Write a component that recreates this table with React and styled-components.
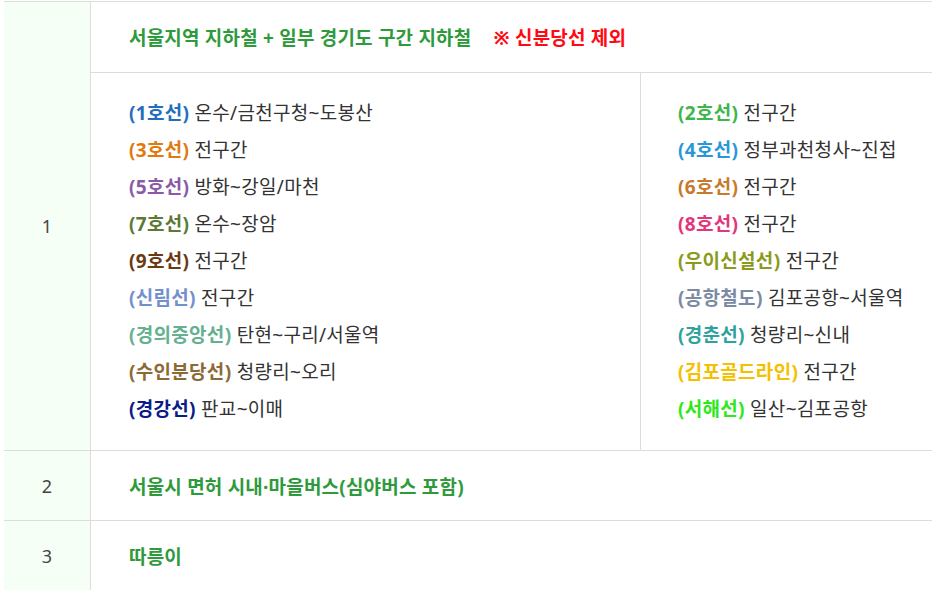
import React from "react";
import styled, { createGlobalStyle } from "styled-components";

const GlobalStyle = createGlobalStyle`
  html, body {
    margin: 0;
    padding: 0;
    overflow: hidden;
    background: #fff;
  }
  body {
    font-family: "Noto Sans", "Noto Sans CJK KR", sans-serif;
    color: #333;
  }
`;

const Table = styled.div`
  margin: 1px 0 0 4px;
  width: 940px;
  border-top: 1px solid #dcdcdc;
`;

const Row = styled.div`
  display: grid;
  grid-template-columns: 87px 1fr;
  border-bottom: 1px solid #dcdcdc;
`;

const NumCell = styled.div`
  background: #f5fff6;
  border-right: 1px solid #dcdcdc;
  display: flex;
  align-items: center;
  justify-content: center;
  font-size: 18px;
  color: #444;
`;

const Body = styled.div`
  display: flex;
  flex-direction: column;
`;

const Title = styled.div`
  display: flex;
  align-items: center;
  height: ${(p) => p.$height || "69px"};
  padding-left: 38px;
  font-size: 19px;
  font-weight: 700;
  letter-spacing: 0.2px;
  color: #2e9a3c;
  white-space: pre;
  border-bottom: ${(p) => (p.$divided ? "1px solid #dcdcdc" : "none")};
`;

const Notice = styled.span`
  color: #ff0a14;
  margin-left: 22px;
`;

const Lines = styled.div`
  display: grid;
  grid-template-columns: 550px 1fr;
`;

const LineCol = styled.ul`
  list-style: none;
  margin: 0;
  padding: 22px 38px 22px ${(p) => (p.$divided ? "38px" : "37px")};
  border-right: ${(p) => (p.$divided ? "1px solid #dcdcdc" : "none")};
`;

const LineItem = styled.li`
  font-size: 19px;
  line-height: 37px;
  letter-spacing: 0.3px;
  color: #333;
  white-space: nowrap;
`;

const LineName = styled.strong`
  font-weight: 700;
  color: ${(p) => p.$color};
`;

const leftLines = [
  ["1호선", "#1f6fc0", "온수/금천구청~도봉산"],
  ["3호선", "#e07a10", "전구간"],
  ["5호선", "#8a5aa8", "방화~강일/마천"],
  ["7호선", "#5c7a36", "온수~장암"],
  ["9호선", "#6a3a12", "전구간"],
  ["신림선", "#7490cc", "전구간"],
  ["경의중앙선", "#64b08f", "탄현~구리/서울역"],
  ["수인분당선", "#8c6a36", "청량리~오리"],
  ["경강선", "#0c1a8c", "판교~이매"],
];

const rightLines = [
  ["2호선", "#3fb54a", "전구간"],
  ["4호선", "#2a97d6", "정부과천청사~진접"],
  ["6호선", "#c87a2c", "전구간"],
  ["8호선", "#e2357a", "전구간"],
  ["우이신설선", "#8c9a1c", "전구간"],
  ["공항철도", "#7d8aa3", "김포공항~서울역"],
  ["경춘선", "#2ea39e", "청량리~신내"],
  ["김포골드라인", "#f4c000", "전구간"],
  ["서해선", "#2ee81a", "일산~김포공항"],
];

function LineList({ items, divided }) {
  return (
    <LineCol $divided={divided}>
      {items.map(([name, color, range]) => (
        <LineItem key={name}>
          <LineName $color={color}>({name})</LineName> {range}
        </LineItem>
      ))}
    </LineCol>
  );
}

function App() {
  return (
    <>
      <GlobalStyle />
      <Table>
        <Row>
          <NumCell>1</NumCell>
          <Body>
            <Title $height="70px" $divided>
              서울지역 지하철 + 일부 경기도 구간 지하철
              <Notice>※ 신분당선 제외</Notice>
            </Title>
            <Lines>
              <LineList items={leftLines} divided />
              <LineList items={rightLines} />
            </Lines>
          </Body>
        </Row>
        <Row>
          <NumCell>2</NumCell>
          <Title>서울시 면허 시내·마을버스(심야버스 포함)</Title>
        </Row>
        <Row>
          <NumCell>3</NumCell>
          <Title>따릉이</Title>
        </Row>
      </Table>
    </>
  );
}

export default App;
